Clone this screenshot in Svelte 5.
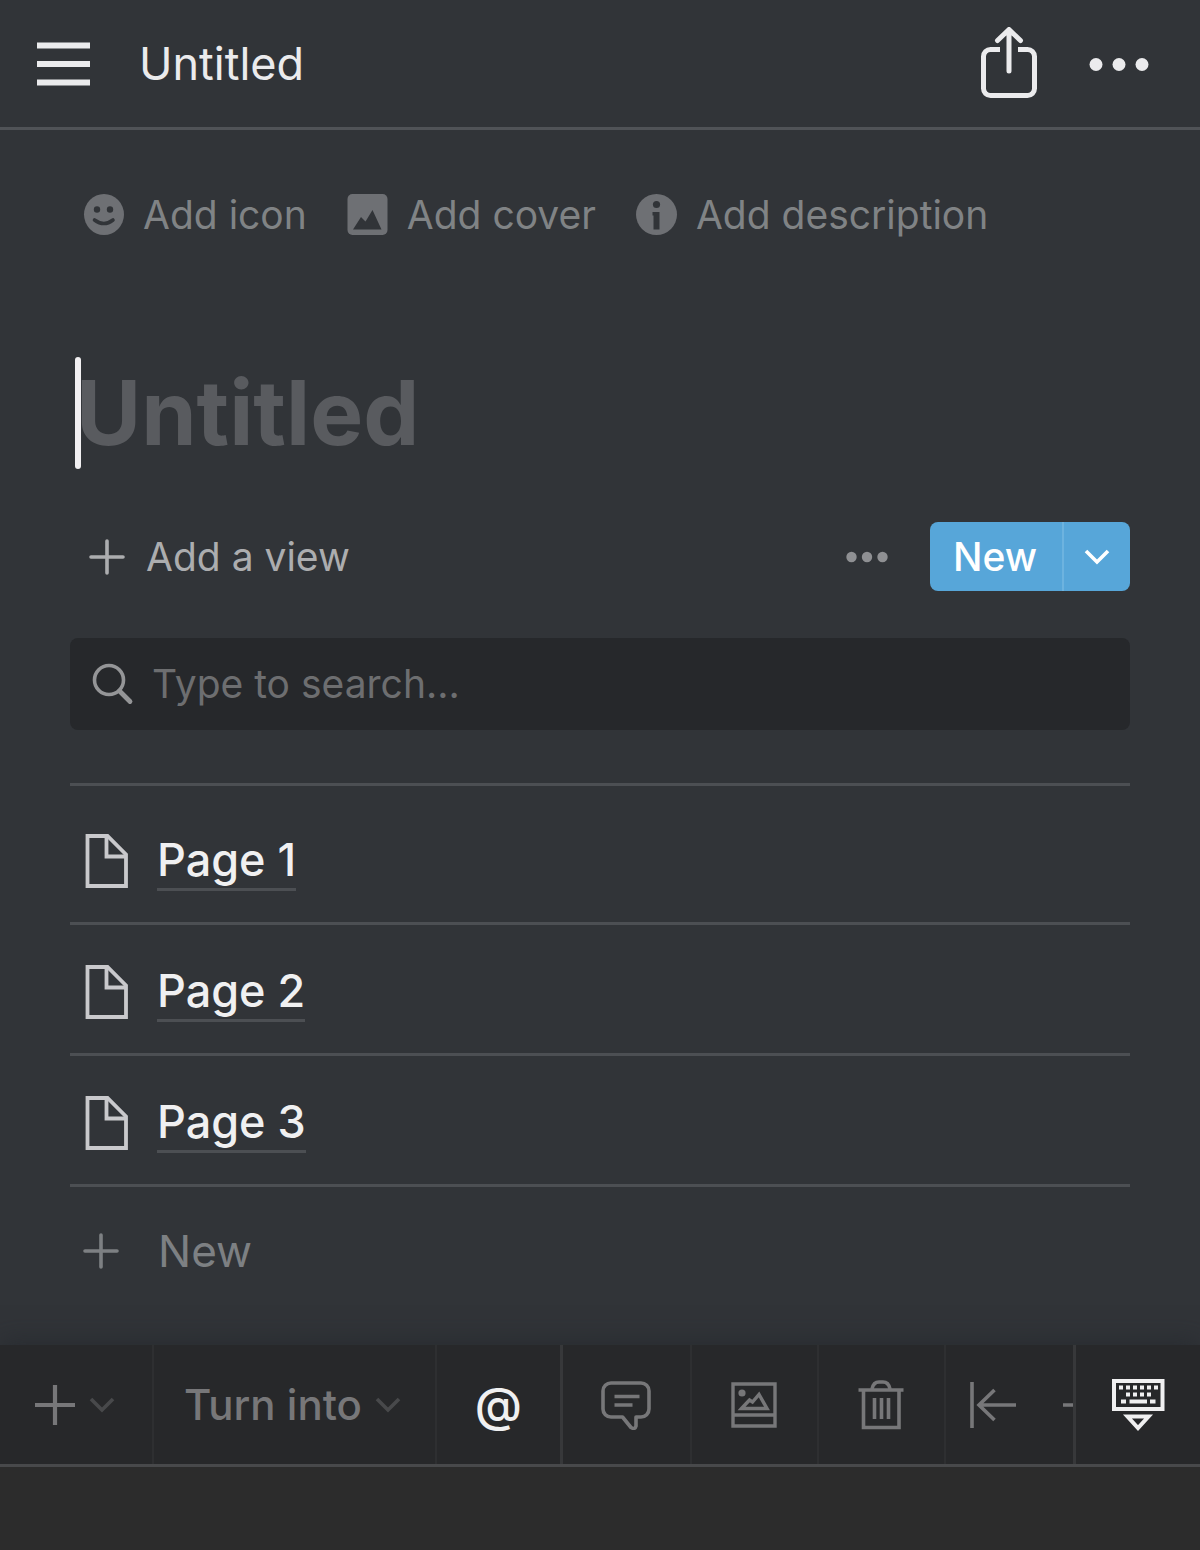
<script>
  let title = $state('');
  let query = $state('');
  const pages = ['Page 1', 'Page 2', 'Page 3'];
</script>

{#snippet chevron()}
  <svg class="chevron" width="26" height="18" viewBox="0 0 26 18" aria-hidden="true">
    <path d="M2 3l11 11L24 3" fill="none" stroke="currentColor" stroke-width="3.6" />
  </svg>
{/snippet}

{#snippet plus()}
  <svg width="36" height="36" viewBox="0 0 36 36" aria-hidden="true">
    <path d="M18 2v32M2 18h32" fill="none" stroke="currentColor" stroke-width="3.6" stroke-linecap="round" />
  </svg>
{/snippet}

<div class="page">
  <header class="topbar">
    <button class="plain" aria-label="Open menu">
      <svg width="54" height="44" viewBox="0 0 54 44" aria-hidden="true">
        <path d="M0 3.5h53M0 22h53M0 40.500h53" stroke="currentColor" stroke-width="5.800" />
      </svg>
    </button>
    <span class="crumb">Untitled</span>
    <button class="plain share" aria-label="Share">
      <svg width="58" height="74" viewBox="0 0 58 74" fill="none" stroke="currentColor" stroke-width="5" aria-hidden="true">
        <path d="M20 22.500H10.500a7 7 0 0 0-7 7V61.500a7 7 0 0 0 7 7h37a7 7 0 0 0 7-7V29.500a7 7 0 0 0-7-7H38" />
        <path d="M29 44V3M17.500 13.500L29 2.500l11.500 11" stroke-linecap="round" stroke-linejoin="round" />
      </svg>
    </button>
    <button class="plain" aria-label="More options">
      <svg width="60" height="14" viewBox="0 0 60 14" fill="currentColor" aria-hidden="true">
        <circle cx="7" cy="7.500" r="6.500" /><circle cx="30" cy="7.500" r="6.500" /><circle cx="53" cy="7.500" r="6.500" />
      </svg>
    </button>
  </header>

  <main>
    <div class="adders">
      <button class="plain adder">
        <svg width="42" height="42" viewBox="0 0 42 42" aria-hidden="true">
          <ellipse cx="21" cy="20.500" rx="20" ry="20.500" fill="#6e7074" />
          <g fill="#313438"><circle cx="14" cy="15.500" r="3.200" /><circle cx="27" cy="15.500" r="3.200" /></g>
          <path d="M11.500 26q9.500 7 18.500 0" fill="none" stroke="#313438" stroke-width="3.600" stroke-linecap="round" />
        </svg>
        Add icon
      </button>
      <button class="plain adder">
        <svg width="42" height="42" viewBox="0 0 42 42" aria-hidden="true">
          <rect x="0.500" y="0" width="40" height="41" rx="5" fill="#6e7074" />
          <path d="M6 35.500l8-12.500 4.500 4.500 7-11.500 9 19.500z" fill="#313438" />
        </svg>
        Add cover
      </button>
      <button class="plain adder">
        <svg width="42" height="42" viewBox="0 0 42 42" aria-hidden="true">
          <circle cx="20.500" cy="20.500" r="20.500" fill="#6e7074" />
          <circle cx="20.500" cy="10.500" r="3.600" fill="#313438" />
          <path d="M16.500 18h7v17.500h-6V21.500h-1z" fill="#313438" />
        </svg>
        Add description
      </button>
    </div>

    <div class="title">
      <input type="text" aria-label="Page title" placeholder="Untitled" bind:value={title} />
      <span class="caret"></span>
    </div>

    <div class="viewbar">
      <button class="plain addview">{@render plus()} Add a view</button>
      <button class="plain dots" aria-label="View options">
        <svg width="42" height="12" viewBox="0 0 42 12" fill="currentColor" aria-hidden="true">
          <circle cx="5.500" cy="6" r="5.200" /><circle cx="21" cy="6" r="5.200" /><circle cx="36.500" cy="6" r="5.200" />
        </svg>
      </button>
      <div class="split">
        <button class="plain new">New</button>
        <button class="plain drop" aria-label="New from template">{@render chevron()}</button>
      </div>
    </div>

    <label class="search">
      <svg width="42" height="42" viewBox="0 0 42 42" fill="none" stroke="currentColor" aria-hidden="true">
        <circle cx="17" cy="17" r="14.500" stroke-width="3.600" />
        <path d="M27.500 28l10.500 10.500" stroke-width="4.800" stroke-linecap="round" />
      </svg>
      <input type="text" aria-label="Search" placeholder="Type to search..." bind:value={query} />
    </label>

    <ul>
      {#each pages as page}
        <li>
          <svg width="44" height="54" viewBox="0 0 44 54" fill="none" stroke="currentColor" stroke-width="3.800" aria-hidden="true">
            <path d="M2.500 2h20l18.500 18.500V52H2.500z" />
            <path d="M21.500 2v20.500h20" />
          </svg>
          <a href="#{page.toLowerCase().replace(' ', '-')}">{page}</a>
        </li>
      {/each}
    </ul>
    <button class="plain newrow">{@render plus()} New</button>
  </main>

  <div class="toolbar" role="toolbar" aria-label="Block tools">
    <div class="strip">
      <button class="plain insert" aria-label="Insert block">
        <svg width="42" height="42" viewBox="0 0 42 42" aria-hidden="true">
          <path d="M21 1v40M1 21h40" stroke="currentColor" stroke-width="4.200" />
        </svg>
        {@render chevron()}
      </button>
      <button class="plain turn">Turn into {@render chevron()}</button>
      <button class="plain cell strong" aria-label="Mention">@</button>
      <button class="plain cell" aria-label="Comment">
        <svg width="50" height="50" viewBox="0 0 50 50" fill="none" stroke="currentColor" stroke-width="3.600" stroke-linejoin="round" aria-hidden="true">
          <path d="M10 3h30a8 8 0 0 1 8 8v18a8 8 0 0 1-8 8h-5v9q-1 4-5 1.500L21.500 37H10a8 8 0 0 1-8-8V11a8 8 0 0 1 8-8z" />
          <path d="M13.500 16.500h25M13.500 25h18" />
        </svg>
      </button>
      <button class="plain cell" aria-label="Image">
        <svg width="46" height="46" viewBox="0 0 46 46" fill="none" stroke="currentColor" stroke-width="3.400" aria-hidden="true">
          <path d="M2 2h42v42H2zM2 33h42" />
          <path d="M10.500 26.500l8-8.500 3 2 6.500-7.500 8 14z" />
          <circle cx="11" cy="11" r="3.600" fill="currentColor" stroke="none" />
        </svg>
      </button>
      <button class="plain cell" aria-label="Delete">
        <svg width="46" height="50" viewBox="0 0 46 50" fill="none" stroke="currentColor" stroke-width="3.600" aria-hidden="true">
          <path d="M5.500 10v37.500h35.500V10M0.500 10h45" />
          <path d="M14 9c1-5 3-7 7-7h4c4 0 6 2 7 7" />
          <path d="M16.500 18v21M23.500 18v21M30.500 18v21" />
        </svg>
      </button>
      <button class="plain outdent" aria-label="Outdent">
        <svg width="46" height="46" viewBox="0 0 46 46" fill="none" stroke="currentColor" stroke-width="3.600" aria-hidden="true">
          <path d="M2 0v46" />
          <path d="M46 23H10M24.500 8L9 23l15.500 15" />
        </svg>
      </button>
      <button class="plain indent" aria-label="Indent">
        <svg width="46" height="46" viewBox="0 0 46 46" fill="none" stroke="currentColor" stroke-width="3.600" aria-hidden="true">
          <path d="M44 0v46" />
          <path d="M0 23h36M21.500 8L37 23 21.500 38" />
        </svg>
      </button>
    </div>
    <button class="plain keyboard" aria-label="Hide keyboard">
      <svg width="54" height="54" viewBox="0 0 54 54" aria-hidden="true">
        <rect x="3" y="3" width="48.500" height="28" fill="none" stroke="currentColor" stroke-width="4" />
        <path d="M8 9.500h4M15 9.500h4M22 9.500h4M29 9.500h4M36 9.500h4M43 9.500h4M15 16.500h4M22 16.500h4M29 16.500h4M36 16.500h4M10 23.500h5M18.500 23.500h17.500M39 23.500h5.500" stroke="currentColor" stroke-width="4" />
        <path d="M16.500 38.500h21L27 50z" fill="none" stroke="currentColor" stroke-width="4" />
      </svg>
    </button>
  </div>
  <div class="tray"></div>
</div>

<style>
  :global(body) {
    margin: 0;
    background: #2c2c2c;
  }
  .page {
    min-height: 100vh;
    display: flex;
    flex-direction: column;
    background: #313438;
    color: #ebebed;
    font-family: Inter, "Liberation Sans", sans-serif;
    font-size: 39px;
    line-height: 48px;
  }
  svg {
    display: block;
    flex: none;
  }
  .plain {
    display: flex;
    align-items: center;
    padding: 0;
    border: 0;
    background: none;
    color: inherit;
    font: inherit;
    white-space: nowrap;
  }
  input {
    min-width: 0;
    flex: 1;
    padding: 0;
    border: 0;
    outline: 0;
    background: none;
    color: inherit;
    font: inherit;
  }
  .topbar {
    display: flex;
    align-items: center;
    height: 127px;
    padding: 0 51px 0 37px;
    border-bottom: 3px solid #505357;
  }
  .crumb {
    margin-left: 48px;
    font-size: 45px;
  }
  .share {
    margin-left: auto;
    margin-right: 51px;
  }
  main {
    padding: 61px 70px 30px;
  }
  .adders {
    display: flex;
    gap: 40px;
    padding-left: 13px;
    color: #808385;
  }
  .adder {
    gap: 18px;
  }
  .title {
    position: relative;
    display: flex;
    margin-top: 118px;
    padding-left: 6px;
    font-size: 89px;
    font-weight: 700;
    line-height: 112px;
  }
  .title input {
    height: 112px;
  }
  .title input::placeholder {
    color: #595b5f;
    opacity: 1;
  }
  .caret {
    position: absolute;
    left: 5px;
    top: 0;
    width: 6px;
    height: 112px;
    border-radius: 3px;
    background: #f2f0f2;
  }
  .viewbar {
    display: flex;
    align-items: center;
    margin-top: 53px;
    padding-left: 19px;
    color: #acadaf;
  }
  .addview {
    gap: 21px;
  }
  .dots {
    margin-left: auto;
    margin-right: 42px;
    color: #8f9093;
  }
  .split {
    display: flex;
    height: 69px;
    border-radius: 8px;
    overflow: hidden;
    background: #57a6d9;
    color: #fff;
    font-weight: 500;
  }
  .new {
    padding: 0 25px 0 23px;
  }
  .drop {
    padding: 0 20px;
    border-left: 2px solid #6db3df;
  }
  .search {
    display: flex;
    align-items: center;
    gap: 18px;
    height: 92px;
    margin-top: 47px;
    padding: 0 22px;
    border-radius: 8px;
    background: #26282b;
    color: #949597;
  }
  .search input::placeholder {
    color: #6d6e70;
    opacity: 1;
  }
  ul {
    margin: 53px 0 0;
    padding: 8px 0 0;
    border-top: 3px solid #4c4f53;
    list-style: none;
  }
  li {
    display: flex;
    align-items: center;
    gap: 28px;
    height: 122px;
    padding: 6px 0 0 15px;
    border-bottom: 3px solid #4c4f53;
    color: #c9c9cc;
  }
  li a {
    border-bottom: 3px solid #4c4f53;
    color: #f0f0f1;
    font-size: 45px;
    font-weight: 500;
    line-height: 56px;
    text-decoration: none;
  }
  .newrow {
    gap: 39px;
    height: 128px;
    padding-left: 13px;
    color: #7d8083;
    font-size: 44px;
  }
  .toolbar {
    display: flex;
    height: 119px;
    border-bottom: 3px solid #48494b;
    background: #27282a;
    color: #777779;
    box-shadow: 0 -4px 24px rgba(32, 36, 42, 0.5);
  }
  .strip {
    display: flex;
    flex: 1;
    min-width: 0;
    overflow: hidden;
  }
  .strip .plain {
    flex: none;
  }
  .toolbar .chevron {
    color: #48494b;
  }
  .insert {
    gap: 13px;
    padding: 0 37px 0 34px;
  }
  .turn {
    gap: 13px;
    padding: 0 34px 0 30px;
    border-left: 2px solid #2e2f31;
    font-size: 42px;
    font-weight: 500;
  }
  .cell {
    justify-content: center;
    width: 127px;
    border-left: 2px solid #2e2f31;
    box-sizing: border-box;
  }
  .strong {
    width: 128px;
    border-right: 3px solid #37383a;
    color: #f0f0f1;
    font-size: 48px;
    font-weight: 500;
  }
  .strong + .cell {
    border-left: 0;
  }
  .outdent {
    padding-left: 24px;
    border-left: 2px solid #2e2f31;
  }
  .indent {
    margin-left: 47px;
  }
  .keyboard {
    justify-content: center;
    width: 127px;
    border-left: 3px solid #37383a;
    color: #f0f0f1;
  }
  .tray {
    flex: 1;
    background: #2c2c2c;
  }
</style>
